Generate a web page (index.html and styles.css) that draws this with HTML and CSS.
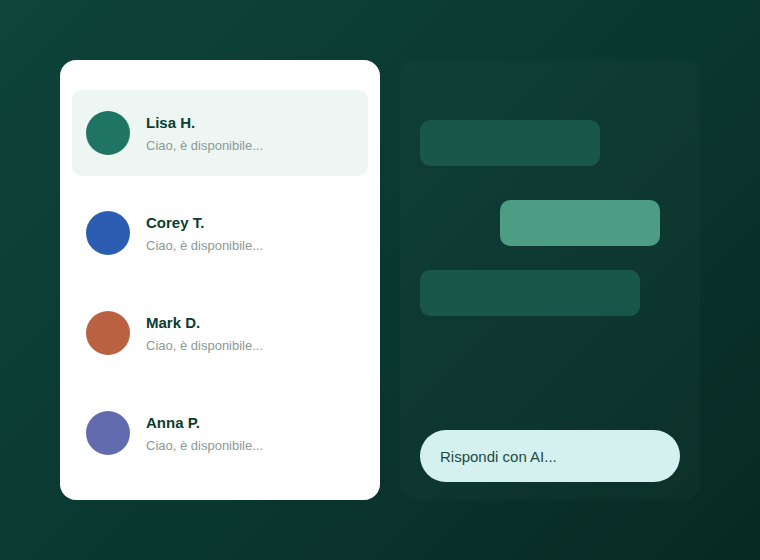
FILE: index.html
```html
<!DOCTYPE html>
<html lang="it">
<head>
  <meta charset="UTF-8">
  <title>Messaggi</title>
  <meta name="viewport" content="width=device-width, initial-scale=1.0">
  <link rel="stylesheet" href="styles.css">
</head>
<body>

<main class="stage">
  <!-- Conversation list -->
  <section class="inbox">
    <div class="thread active">
      <div class="avatar green"></div>
      <div class="thread-text">
        <div class="name">Lisa H.</div>
        <div class="preview">Ciao, è disponibile...</div>
      </div>
    </div>
    <div class="thread">
      <div class="avatar blue"></div>
      <div class="thread-text">
        <div class="name">Corey T.</div>
        <div class="preview">Ciao, è disponibile...</div>
      </div>
    </div>
    <div class="thread">
      <div class="avatar rust"></div>
      <div class="thread-text">
        <div class="name">Mark D.</div>
        <div class="preview">Ciao, è disponibile...</div>
      </div>
    </div>
    <div class="thread">
      <div class="avatar violet"></div>
      <div class="thread-text">
        <div class="name">Anna P.</div>
        <div class="preview">Ciao, è disponibile...</div>
      </div>
    </div>
  </section>

  <!-- Chat preview -->
  <section class="chat">
    <div class="bubbles">
      <div class="bubble in"></div>
      <div class="bubble out"></div>
      <div class="bubble in wide"></div>
    </div>
    <div class="reply">Rispondi con AI...</div>
  </section>
</main>

</body>
</html>
```

FILE: styles.css
```css
* {
  box-sizing: border-box;
}
body {
  margin: 0;
  padding: 0;
  height: 100vh;
  overflow: hidden;
  font-family: "Liberation Sans", Arial, sans-serif;
  background: linear-gradient(135deg, #0e4439 0%, #0a3830 50%, #072a22 100%);
}

.stage {
  display: flex;
  gap: 20px;
  padding: 60px;
  height: 100%;
}

/* Conversation list */
.inbox {
  width: 320px;
  background: #ffffff;
  border-radius: 16px;
  padding: 30px 12px 24px;
  display: flex;
  flex-direction: column;
  gap: 14px;
}
.thread {
  height: 86px;
  display: flex;
  align-items: center;
  gap: 16px;
  padding: 0 14px;
  border-radius: 10px;
}
.thread.active {
  background: #edf6f3;
}
.avatar {
  width: 44px;
  height: 44px;
  border-radius: 50%;
  flex-shrink: 0;
}
.avatar.green  { background: #207463; }
.avatar.blue   { background: #2c5db1; }
.avatar.rust   { background: #b96140; }
.avatar.violet { background: #616bae; }

.name {
  font-size: 15px;
  font-weight: bold;
  color: #0b3d31;
  margin-bottom: 7px;
}
.preview {
  font-size: 13px;
  color: #8c9995;
}

/* Chat preview */
.chat {
  width: 300px;
  background: rgba(255, 255, 255, 0.02);
  border-radius: 16px;
  padding: 60px 20px 18px;
  display: flex;
  flex-direction: column;
  justify-content: space-between;
}
.bubbles {
  display: flex;
  flex-direction: column;
}
.bubble {
  height: 46px;
  border-radius: 10px;
}
.bubble.in {
  background: #1a574b;
  width: 180px;
}
.bubble.out {
  background: #4d9d85;
  width: 160px;
  align-self: flex-end;
  margin: 34px 20px 24px 0;
}
.bubble.in.wide {
  width: 220px;
}
.reply {
  height: 52px;
  border-radius: 26px;
  background: #d4f1ef;
  color: #1f4a42;
  font-size: 15px;
  display: flex;
  align-items: center;
  padding: 0 20px;
}
```
